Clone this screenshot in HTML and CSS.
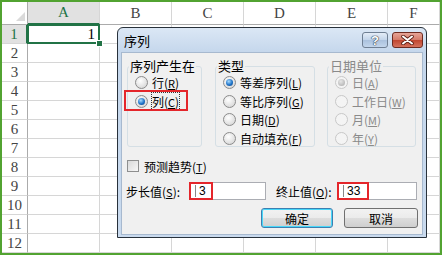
FILE: index.html
```html
<!DOCTYPE html>
<html lang="zh-CN">
<head>
    <meta charset="UTF-8">
    <title>序列</title>
    <link rel="stylesheet" href="styles.css">
</head>
<body>
<div class="sheet">
    <div class="hrow">
        <div class="corner"><span class="tri"></span></div>
        <div class="ch active">A</div><div class="ch">B</div><div class="ch">C</div><div class="ch">D</div><div class="ch">E</div><div class="ch">F</div>
    </div>
    <div class="row"><div class="rh active">1</div><div class="cell sel">1</div><div></div><div></div><div></div><div></div><div></div></div>
    <div class="row"><div class="rh">2</div><div></div><div></div><div></div><div></div><div></div><div></div></div>
    <div class="row"><div class="rh">3</div><div></div><div></div><div></div><div></div><div></div><div></div></div>
    <div class="row"><div class="rh">4</div><div></div><div></div><div></div><div></div><div></div><div></div></div>
    <div class="row"><div class="rh">5</div><div></div><div></div><div></div><div></div><div></div><div></div></div>
    <div class="row"><div class="rh">6</div><div></div><div></div><div></div><div></div><div></div><div></div></div>
    <div class="row"><div class="rh">7</div><div></div><div></div><div></div><div></div><div></div><div></div></div>
    <div class="row"><div class="rh">8</div><div></div><div></div><div></div><div></div><div></div><div></div></div>
    <div class="row"><div class="rh">9</div><div></div><div></div><div></div><div></div><div></div><div></div></div>
    <div class="row"><div class="rh">10</div><div></div><div></div><div></div><div></div><div></div><div></div></div>
    <div class="row"><div class="rh">11</div><div></div><div></div><div></div><div></div><div></div><div></div></div>
    <div class="row"><div class="rh">12</div><div></div><div></div><div></div><div></div><div></div><div></div></div>

    <div class="dlg">
        <div class="dlg-title">
            <span>序列</span>
            <div class="dlg-btns">
                <span class="tbtn help">?</span>
                <span class="tbtn close">
                    <svg width="13" height="10" viewBox="0 0 13 10"><path d="M2 1.5 L11 8.5 M11 1.5 L2 8.5" stroke="#5b1d14" stroke-width="3.6" stroke-linecap="round"/><path d="M2 1.5 L11 8.5 M11 1.5 L2 8.5" stroke="#fff" stroke-width="2" stroke-linecap="round"/></svg>
                </span>
            </div>
        </div>
        <div class="dlg-body">
            <div class="groups">
                <fieldset class="grp g1">
                    <legend>序列产生在</legend>
                    <div class="opt"><span class="radio"></span><span>行(<u>R</u>)</span></div>
                    <div class="opt mark"><span class="radio on"></span><span class="focus">列(<u>C</u>)</span></div>
                </fieldset>
                <fieldset class="grp g2">
                    <legend>类型</legend>
                    <div class="opt"><span class="radio on"></span><span>等差序列(<u>L</u>)</span></div>
                    <div class="opt"><span class="radio"></span><span>等比序列(<u>G</u>)</span></div>
                    <div class="opt"><span class="radio"></span><span>日期(<u>D</u>)</span></div>
                    <div class="opt"><span class="radio"></span><span>自动填充(<u>F</u>)</span></div>
                </fieldset>
                <fieldset class="grp g3 off">
                    <legend>日期单位</legend>
                    <div class="opt"><span class="radio on"></span><span>日(<u>A</u>)</span></div>
                    <div class="opt"><span class="radio"></span><span>工作日(<u>W</u>)</span></div>
                    <div class="opt"><span class="radio"></span><span>月(<u>M</u>)</span></div>
                    <div class="opt"><span class="radio"></span><span>年(<u>Y</u>)</span></div>
                </fieldset>
            </div>
            <div class="check-row"><span class="check"></span><span>预测趋势(<u>T</u>)</span></div>
            <div class="field-row">
                <span class="lbl lbl-step">步长值(<u>S</u>):</span>
                <div class="field f-step"><span class="caret"></span>3<span class="redbox rb-step"></span></div>
                <span class="lbl lbl-stop">终止值(<u>O</u>):</span>
                <div class="field f-stop"><span class="caret"></span>33<span class="redbox rb-stop"></span></div>
            </div>
            <div class="btn-row">
                <button class="btn ok">确定</button>
                <button class="btn cancel">取消</button>
            </div>
        </div>
    </div>
</div>
</body>
</html>
```

FILE: styles.css
```css
body {
    margin: 0;
    font-family: "Noto Sans CJK SC", sans-serif;
}

.sheet {
    position: relative;
    width: 442px;
    height: 255px;
    box-sizing: border-box;
    border: 2px solid #52a331; /* green frame round the shot */
    background: #fff;
    overflow: hidden;
}

.hrow,
.row {
    display: grid;
    grid-template-columns: 26px repeat(5, 72px) 1fr;
}

.hrow {
    height: 23px;
}

.row {
    height: 19px;
}

.hrow > div,
.row > div {
    box-sizing: border-box;
    border-right: 1px solid #d6d6d6;
    border-bottom: 1px solid #d6d6d6;
}

.corner {
    display: flex;
    align-items: flex-end;
    justify-content: flex-end;
    padding: 0 2px 3px 0;
    border-bottom-color: #ababab !important;
    border-right-color: #ababab !important;
}

.tri {
    width: 9px;
    height: 9px;
    background: #dadada;
    clip-path: polygon(100% 0, 100% 100%, 0 100%);
}

.ch,
.rh {
    display: flex;
    align-items: center;
    justify-content: center;
    font: 15px "Liberation Serif", serif;
    color: #444;
}

.ch {
    border-bottom-color: #ababab !important;
}

.rh {
    border-right-color: #ababab !important;
}

.ch.active {
    background: #e1e1e1;
    color: #217346;
    border-bottom: 2px solid #217346 !important;
}

.rh.active {
    background: #e1e1e1;
    color: #217346;
    border-right: 2px solid #217346 !important;
}

.cell.sel {
    position: relative;
    text-align: right;
    padding-right: 4px;
    font: 15px/18px "Liberation Serif", serif;
    color: #000;
}

.cell.sel::after {
    content: '';
    position: absolute;
    left: -1px;
    top: -1px;
    right: -1px;
    bottom: -1px;
    border: 2px solid #217346;
}

.cell.sel::before {
    content: '';
    position: absolute;
    right: -4px;
    bottom: -4px;
    width: 5px;
    height: 5px;
    background: #217346;
    border: 1px solid #fff;
    z-index: 1;
}

/* dialog */
.dlg {
    position: absolute;
    left: 115px;
    top: 25px;
    width: 310px;
    height: 211px;
    box-sizing: border-box;
    border: 1px solid #28313b;
    border-radius: 6px 6px 0 0;
    background: linear-gradient(#dbe7f5, #c5d7ec 24px, #c9daee);
    padding: 0 3px 2px;
    display: flex;
    flex-direction: column;
    font-size: 12px;
    color: #000;
}

.dlg-title {
    height: 24px;
    display: flex;
    align-items: center;
    padding-left: 3px;
    font-size: 13px;
}

.dlg-btns {
    margin-left: auto;
    display: flex;
    gap: 4px;
}

.tbtn {
    height: 16px;
    box-sizing: border-box;
    border-radius: 3px;
    display: flex;
    align-items: center;
    justify-content: center;
}

.help {
    width: 26px;
    border: 1px solid #6f7f93;
    background: linear-gradient(#e4edf7, #c2d4ea 50%, #aac1dd 51%, #c3d6ec);
    color: #fff;
    font: bold 13px "Liberation Sans", sans-serif;
    text-shadow: 0 0 1px #2c3a4c, 0 0 1px #2c3a4c, 0 0 1px #2c3a4c;
}

.close {
    width: 31px;
    border: 1px solid #6e2a20;
    background: linear-gradient(#e6a497, #d47a69 50%, #c0452f 51%, #d5725d);
}

.dlg-body {
    flex: 1;
    background: #f0f0f0;
    border: 1px solid #a7b9cf;
    padding: 0 3px 0 5px;
}

.groups {
    display: flex;
    margin-top: 6px;
}

.grp {
    margin: 0;
    padding: 0 0 0 7px;
    height: 88px;
    box-sizing: border-box;
    border: 1px solid #d5dfe5;
    border-radius: 3px;
    min-width: 0;
}

.grp legend {
    padding: 0 1px;
    margin-left: -6px;
    line-height: 14px;
    font-size: 13px;
}

.g1 {
    width: 75px;
}

.g2 {
    width: 100px;
    margin-left: 13px;
}

.g3 {
    width: 89px;
    margin-left: 12px;
}

.opt {
    position: relative;
    display: flex;
    align-items: center;
    height: 18.7px;
    gap: 4px;
    white-space: nowrap;
    font-size: 12px;
}

.opt u,
.check-row u,
.lbl u {
    font-size: 11px;
}

.radio {
    position: relative;
    flex: none;
    width: 13px;
    height: 13px;
    box-sizing: border-box;
    border-radius: 50%;
    border: 1px solid #8b8b8b;
    background: radial-gradient(circle at 40% 35%, #ffffff, #e2e2e2 60%, #cfcfcf);
}

.radio.on::after {
    content: '';
    position: absolute;
    left: 2px;
    top: 2px;
    width: 7px;
    height: 7px;
    border-radius: 50%;
    background: radial-gradient(circle at 40% 35%, #a8dcff, #1f73c8 55%, #0c3f7a);
}

.off legend,
.off .opt {
    color: #8a8a8a;
}

.off .radio {
    border-color: #c8c8c8;
    background: #f4f4f4;
}

.off .radio.on::after {
    background: radial-gradient(circle at 40% 35%, #e6e6e6, #a9a9a9);
}

.focus {
    outline: 1px dotted #333;
    outline-offset: 0;
}

/* red annotation boxes */
.mark {
    width: fit-content;
}

.mark::after {
    content: '';
    position: absolute;
    left: -11px;
    right: -9px;
    top: -2px;
    bottom: -1px;
    border: 2px solid #e4262b;
}

.check-row {
    display: flex;
    align-items: center;
    gap: 5px;
    height: 16px;
    margin-top: 11px;
}

.check {
    width: 12px;
    height: 12px;
    box-sizing: border-box;
    border: 1px solid #8e8f8f;
    background: linear-gradient(135deg, #d9d9d9, #f7f7f7);
}

.field-row {
    display: flex;
    align-items: center;
    height: 18px;
    margin-top: 8px;
}

.lbl-step {
    width: 63px;
    margin-left: -1px;
}

.lbl-stop {
    width: 61px;
    margin-left: 10px;
}

.lbl {
    white-space: nowrap;
}

.field {
    position: relative;
    height: 18px;
    box-sizing: border-box;
    border: 1px solid #abadb3;
    background: #fff;
    display: flex;
    align-items: center;
    padding-left: 5px;
    font: 12px "Liberation Sans", sans-serif;
}

.f-step {
    width: 77px;
}

.f-stop {
    width: 80px;
}

.caret {
    width: 1px;
    height: 12px;
    background: #888;
    margin-right: 3px;
}

.redbox {
    position: absolute;
    left: -1px;
    top: -1px;
    bottom: -1px;
    border: 2px solid #e4262b;
}

.rb-step {
    width: 20px;
}

.rb-stop {
    width: 28px;
}

.btn-row {
    display: flex;
    justify-content: flex-end;
    gap: 11px;
    margin-top: 8px;
    padding-right: 1px;
}

.btn {
    height: 20px;
    padding: 0;
    font: 12px "Noto Sans CJK SC", sans-serif;
    color: #000;
    border: 1px solid #707070;
    border-radius: 3px;
    background: linear-gradient(#f2f2f2, #ebebeb 50%, #dddddd 51%, #cfcfcf);
}

.ok {
    width: 72px;
    border-color: #3c7fb1;
    box-shadow: inset 0 0 0 1px #48d7f9;
}

.cancel {
    width: 74px;
}
```
